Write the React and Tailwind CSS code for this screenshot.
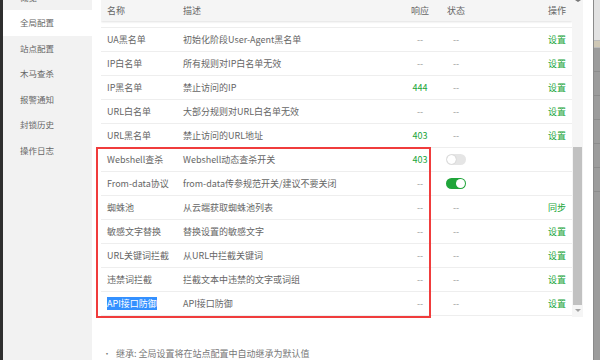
import React from "react";

const rows = [
  { name: "UA黑名单", desc: "初始化阶段User-Agent黑名单", resp: "--", status: "--", op: "设置" },
  { name: "IP白名单", desc: "所有规则对IP白名单无效", resp: "--", status: "--", op: "设置" },
  { name: "IP黑名单", desc: "禁止访问的IP", resp: "444", status: "--", op: "设置" },
  { name: "URL白名单", desc: "大部分规则对URL白名单无效", resp: "--", status: "--", op: "设置" },
  { name: "URL黑名单", desc: "禁止访问的URL地址", resp: "403", status: "--", op: "设置" },
  { name: "Webshell查杀", desc: "Webshell动态查杀开关", resp: "403", status: "off", op: "" },
  { name: "From-data协议", desc: "from-data传参规范开关/建议不要关闭", resp: "--", status: "on", op: "" },
  { name: "蜘蛛池", desc: "从云端获取蜘蛛池列表", resp: "--", status: "--", op: "同步" },
  { name: "敏感文字替换", desc: "替换设置的敏感文字", resp: "--", status: "--", op: "设置" },
  { name: "URL关键词拦截", desc: "从URL中拦截关键词", resp: "--", status: "--", op: "设置" },
  { name: "违禁词拦截", desc: "拦截文本中违禁的文字或词组", resp: "--", status: "--", op: "设置" },
  { name: "API接口防御", desc: "API接口防御", resp: "--", status: "--", op: "设置", selected: true },
];

const menu = ["概览", "全局配置", "站点配置", "木马查杀", "报警通知", "封锁历史", "操作日志"];

function Toggle({ on }) {
  return on ? (
    <div className="flex h-[11px] w-[20px] items-center justify-end rounded-full bg-[#20a53a] px-[1px]">
      <div className="h-[9px] w-[9px] rounded-full bg-white" />
    </div>
  ) : (
    <div className="flex h-[11px] w-[20px] items-center justify-start rounded-full bg-[#e5e5e5] px-[1px]">
      <div className="h-[9px] w-[9px] rounded-full bg-white shadow-[0_0_1px_rgba(0,0,0,0.3)]" />
    </div>
  );
}

export default function App() {
  return (
    <div
      className="flex h-[360px] w-[600px] overflow-hidden bg-white text-[9px] text-[#666]"
      style={{ fontFamily: '"Noto Sans CJK SC", "Noto Sans", sans-serif' }}
    >
      <div className="w-[3px] shrink-0 bg-[#2f2f2f]" />
      <aside className="w-[89px] shrink-0 bg-[#f2f2f2]">
        <div className="mt-[-15.5px]">
          {menu.map((m) => (
            <div
              key={m}
              className={
                "flex h-[25.5px] items-center pl-[17px] text-[8.5px] text-[#666] " +
                (m === "全局配置" ? "bg-white" : "")
              }
            >
              {m}
            </div>
          ))}
        </div>
      </aside>
      <main className="flex w-[501px] shrink-0 flex-col pl-[9px] pr-[10px]">
        <div className="relative flex h-[318px]">
          <div className="flex w-[471px] flex-col overflow-hidden">
            <div className="relative z-10 grid h-[21px] shrink-0 grid-cols-[76px_223px_40px_32px_100px] items-center bg-[#f5f5f5] shadow-[0_1px_2px_rgba(0,0,0,0.12)]">
              <div className="pl-[6px]">名称</div>
              <div className="pl-[6px]">描述</div>
              <div className="text-center">响应</div>
              <div className="text-center">状态</div>
              <div className="pr-[6px] text-right">操作</div>
            </div>
            <div className="h-[7px] shrink-0 border-b border-[#eeeeee]" />
            {rows.map((r) => (
              <div
                key={r.name}
                className="grid h-[24px] shrink-0 grid-cols-[76px_223px_40px_32px_100px] items-center border-b border-[#eeeeee]"
              >
                <div className="pl-[6px]">
                  {r.selected ? (
                    <span className="bg-[#3390ff] text-white">{r.name}</span>
                  ) : (
                    r.name
                  )}
                </div>
                <div className="whitespace-nowrap pl-[6px]">{r.desc}</div>
                <div className={"text-center " + (r.resp === "--" ? "text-[#999]" : "text-[#20a53a]")}>
                  {r.resp}
                </div>
                <div className="flex justify-center text-[#999]">
                  {r.status === "on" ? <Toggle on /> : r.status === "off" ? <Toggle /> : "--"}
                </div>
                <div className="pr-[6px] text-right text-[#20a53a]">{r.op}</div>
              </div>
            ))}
          </div>
          <div className="flex w-[11px] shrink-0 flex-col bg-[#f5f5f5]">
            <div className="flex h-[6px] items-start justify-center">
              <div className="h-0 w-0 border-x-[3px] border-t-[2px] border-x-transparent border-t-[#777]" />
            </div>
            <div className="h-[141px]" />
            <div className="mx-[1px] h-[158px] bg-[#c1c1c1]" />
            <div className="flex h-[11px] items-center justify-center">
              <div className="h-0 w-0 border-x-[3px] border-t-[3px] border-x-transparent border-t-[#a3a3a3]" />
            </div>
          </div>
          <div className="pointer-events-none absolute left-[-5px] top-[147px] h-[171px] w-[335px] border-2 border-[#f03c3c]" />
        </div>
        <div className="mt-[31px] flex items-center gap-[5px] pl-[2px] leading-[12px] text-[#777]">
          <span className="text-[8px]">•</span>
          <span>继承: 全局设置将在站点配置中自动继承为默认值</span>
        </div>
      </main>
      <div className="flex w-[7px] shrink-0 flex-col border-l border-[#8a8a8a] bg-[#9c9c9c]">
        <div className="h-[40px] bg-[#e2e2e2]" />
        <div className="h-[8px] border-y border-[#bbb] bg-[#cfc8b6]" />
        <div className="h-[24px] border-b border-[#8c8c8c]" />
        <div className="h-[24px] border-b border-[#8c8c8c]" />
        <div className="h-[24px] border-b border-[#8c8c8c]" />
        <div className="h-[24px] border-b border-[#8c8c8c]" />
        <div className="h-[24px] border-b border-[#8c8c8c]" />
        <div className="h-[24px] border-b border-[#8c8c8c]" />
      </div>
    </div>
  );
}
